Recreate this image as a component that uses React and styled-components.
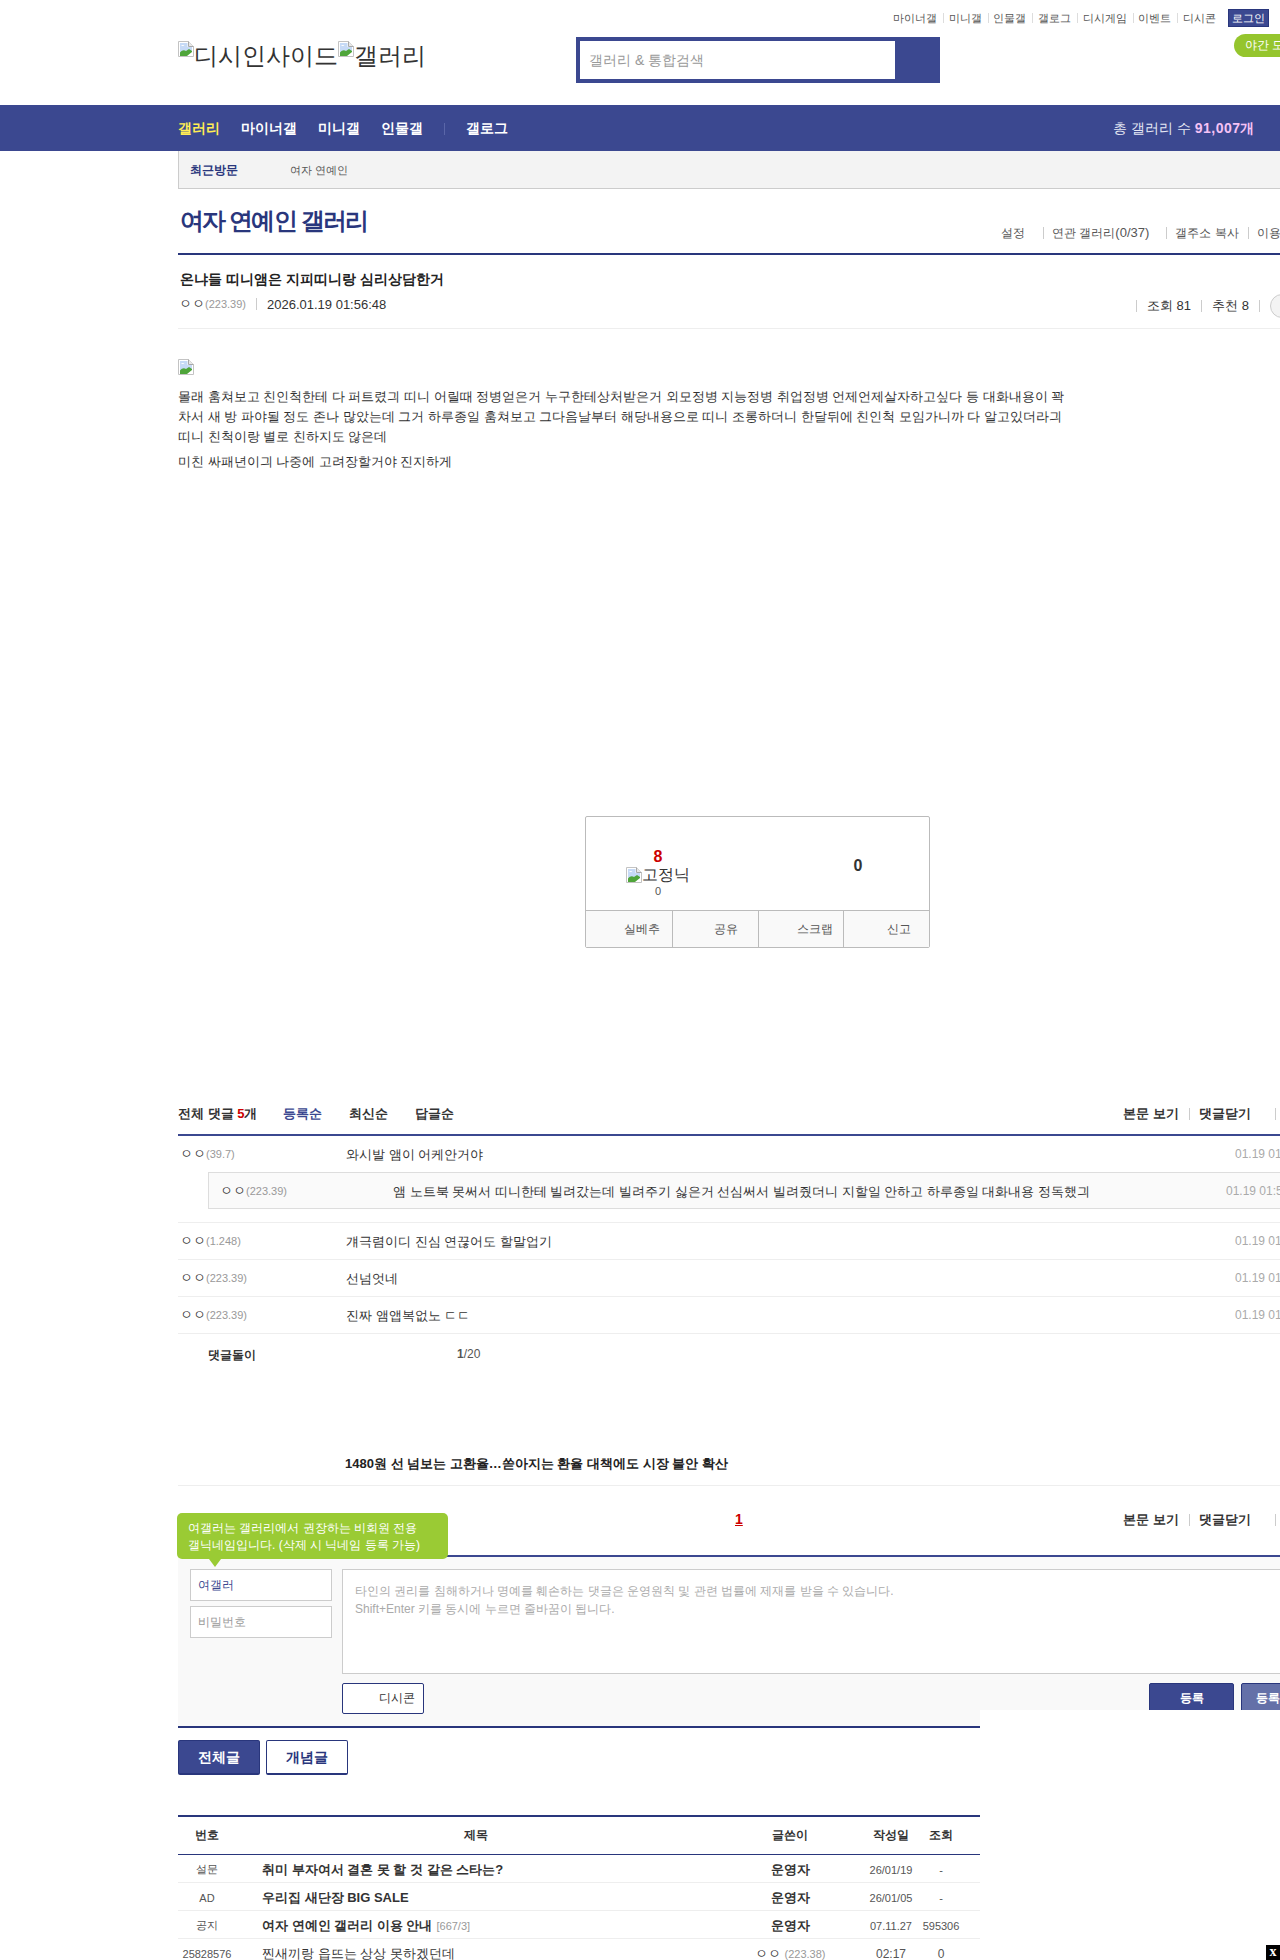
import React from "react";
import styled, { createGlobalStyle } from "styled-components";

const Global = createGlobalStyle`
  html, body { margin: 0; padding: 0; background: #fff; }
  body { width: 1280px; height: 1960px; overflow: hidden; font-family: "Liberation Sans", sans-serif; color: #333; font-size: 12px; }
  * { box-sizing: border-box; }
`;

const Page = styled.div`position: relative; width: 1280px; height: 1960px; overflow: hidden;`;

const Header = styled.header`height: 105px; padding-left: 178px; width: 1400px;`;
const TopLinks = styled.div`display: flex; justify-content: flex-end; align-items: flex-start; width: 1091px; height: 34px; padding-top: 9px; font-size: 11px; color: #555;`;
const TopLink = styled.span`
  padding: 0 5.85px; line-height: 18px; position: relative; color: #555;
  & + &::before { content: ""; position: absolute; left: 0; top: 4px; width: 1px; height: 10px; background: #ddd; }
`;
const LoginBtn = styled.span`margin-left: 6px; width: 41px; height: 18px; background: #3b4890; border: 1px solid #29367c; color: #fff; display: flex; align-items: center; justify-content: center; font-size: 11px;`;
const HeaderMain = styled.div`display: flex; align-items: flex-start;`;
const Logo = styled.div`width: 398px; display: flex; align-items: flex-start; padding-top: 7px; font-size: 24px; line-height: 30px; color: #333;`;
const Search = styled.div`margin-top: 3px; width: 364px; height: 46px; display: flex; background: #3b4890; padding: 4px 0 4px 4px;`;
const SearchInput = styled.div`width: 315px; background: #fff; color: #999; font-size: 14px; display: flex; align-items: center; padding: 2px 0 0 9px;`;
const NightPill = styled.div`margin-left: 294px; flex: none; width: 90px; height: 23px; border-radius: 12px; background: #95c52d; color: #fff; font-size: 12px; line-height: 23px; padding-left: 11px; white-space: nowrap;`;

const BrokenSvg = styled.svg`flex: none; display: block;`;
const BrokenImage = () => (
  <BrokenSvg width="16" height="16" viewBox="0 0 16 16">
    <path d="M0.5 0.5H10.5L15.5 5.5V15.5H0.5Z" fill="#fff" stroke="#c3c3c3" />
    <path d="M10.5 0.5V5.5H15.5" fill="#e8e8e8" stroke="#a8a8a8" />
    <path d="M2 2H9.5V6H14V10L8 14H2Z" fill="#c6daf6" />
    <path d="M2 14V11.5C4 9 6 8.5 8 10L11 8L14 10V11L9 15H2Z" fill="#4fa53a" />
    <path d="M10 15L15 11V15Z" fill="#fff" />
    <path d="M3 5C4 3.8 5.5 3.8 6.5 5H3Z" fill="#fff" />
  </BrokenSvg>
);

const Nav = styled.nav`height: 46px; background: #3b4890; padding: 1px 0 0 178px; display: flex; align-items: center; font-size: 14px; font-weight: 700; color: #fff;`;
const NavItem = styled.span`color: ${(p) => (p.$active ? "#ffed54" : "#fff")}; margin-right: 21px;`;
const NavSep = styled.i`width: 1px; height: 12px; background: #5a66a8; margin: 0 21px 0 0;`;
const NavTotal = styled.span`margin-left: auto; margin-right: 25px; font-weight: 400; color: #e6e8f4;`;
const NavCount = styled.b`color: #f5c2f5; letter-spacing: 0.5px;`;

const Wrap = styled.main`margin-left: 178px; width: 1160px;`;
const Recent = styled.div`height: 38px; background: #f3f3f3; border-left: 1px solid #ccc; border-bottom: 1px solid #ccc; display: flex; align-items: center; padding: 1px 0 0 11px; font-size: 11px; color: #555;`;
const RecentLabel = styled.b`color: #29367c; width: 100px; font-size: 12px;`;

const TitleBar = styled.div`height: 66px; border-bottom: 2px solid #29367c; position: relative; display: flex; align-items: flex-start; justify-content: space-between;`;
const GalleryTitle = styled.h1`margin: 15px 0 0 2px; font-size: 24px; line-height: 34px; font-weight: 700; color: #29367c; letter-spacing: -1.8px;`;
const TitleLinks = styled.div`display: flex; margin-top: 37px; position: absolute; left: 814px; font-size: 12px; color: #555; white-space: nowrap; align-items: center;`;
const TitleLink = styled.span`padding-right: 9px; padding-left: 9px; position: relative; line-height: 14px; margin-left: ${(p) => p.$ml || 0}px;
  ${(p) => p.$sep && `&::before { content: ""; position: absolute; left: 0; top: 1px; width: 1px; height: 12px; background: #ccc; }`}
`;
const RelCount = styled.span`font-size: 13px;`;

const PostHead = styled.section`height: 74px; border-bottom: 1px solid #eee; position: relative;`;
const PostTitle = styled.h2`margin: 0; padding: 14px 0 0 2px; font-size: 14px; line-height: 20px; font-weight: 700; color: #222;`;
const PostMeta = styled.div`display: flex; justify-content: space-between; align-items: center; margin-top: 5px; height: 20px;`;
const Writer = styled.div`display: flex; align-items: center; padding-left: 1px; font-size: 13px; color: #333;`;
const Ip = styled.span`font-size: 11px; color: #999;`;
const MetaSep = styled.i`width: 1px; height: 12px; background: #ccc; margin: 0 10px;`;
const Stats = styled.div`display: flex; align-items: center; font-size: 13px; color: #333; margin-top: 4px; white-space: nowrap; position: absolute; left: 948px;`;
const StatSep = styled.i`width: 1px; height: 12px; background: #ccc; margin: 0 10px;`;
const RoundBtn = styled.i`width: 24px; height: 24px; border-radius: 50%; background: #f3f3f3; border: 1px solid #ccc; flex: none; margin-right: 20px;`;

const Body = styled.article`width: 900px; padding-top: 30px; font-size: 13px; line-height: 20px; color: #333; height: 487px;`;
const Para = styled.p`margin: 0 0 5px; width: 890px;`;
const ImgWrap = styled.div`height: 28px;`;

const RecBox = styled.div`margin-left: 407px; width: 345px; height: 132px; border: 1px solid #bbb; border-radius: 2px;`;
const RecTop = styled.div`height: 93px; position: relative; display: flex;`;
const RecLeft = styled.div`width: 152px; padding-top: 31px; display: flex; flex-direction: column; align-items: center; padding-right: 8px;`;
const RecNum = styled.b`font-size: 16px; line-height: 17px; color: #c00;`;
const FixedNick = styled.div`display: flex; align-items: center; font-size: 16px; line-height: 19px; color: #333;`;
const RecSub = styled.span`font-size: 11px; line-height: 14px; color: #555;`;
const RecRight = styled.b`flex: 1; text-align: center; font-size: 16px; line-height: 18px; padding: 40px 0 0 49px; color: #333;`;
const RecBtns = styled.div`height: 37px; background: #f9f9f9; border-top: 1px solid #bbb; display: grid; grid-template-columns: repeat(4, 1fr); font-size: 12px; color: #555;`;
const RecBtn = styled.div`display: flex; align-items: center; justify-content: flex-end; padding: 1px ${(p) => p.$pr}px 0 0; & + & { border-left: 1px solid #bbb; }`;

const CmtHead = styled.div`height: ${(p) => p.$h}px; border-bottom: 2px solid #3b4890; display: flex; align-items: flex-start; font-size: 13px; font-weight: 700; color: #333; padding-top: ${(p) => p.$pt}px; position: relative;`;
const Tab = styled.span`margin-left: ${(p) => p.$ml}px; color: ${(p) => p.$color || "#333"};`;
const PageNum = styled(Tab)`font-size: 14px; text-decoration: underline;`;
const Red = styled.span`color: #c00;`;
const HeadRight = styled.div`display: flex; align-items: center; position: absolute; left: 945px; white-space: nowrap;`;
const HeadSep = styled.i`width: 1px; height: 12px; background: #ccc; margin: 0 ${(p) => p.$mr ?? 9}px 0 ${(p) => p.$ml || 10}px;`;

const CmtRow = styled.div`min-height: 37px; border-bottom: 1px solid #eee; `;
const CmtLine = styled.div`display: flex; height: 36px; position: relative; font-size: 13px; color: #333; align-items: center;`;
const CmtName = styled.div`width: ${(p) => p.$w}px; padding-left: ${(p) => p.$pl}px; flex: none; font-size: 13px; color: #333; margin-top: -1px;`;
const CmtText = styled.div`flex: none; line-height: 18px; margin-top: 2px;`;
const CmtDate = styled.div`position: absolute; left: ${(p) => p.$left}px; top: 11px; font-size: 12px; color: #aaa; white-space: nowrap;`;
const Reply = styled.div`margin: 0 0 13px 30px; background: #fafafa; border: 1px solid #ddd; height: 37px;`;
const CmtFoot = styled.div`height: 119px; padding: 13px 0 0 30px; display: flex; font-size: 12px;`;
const BotName = styled.b`width: 249px; color: #333;`;
const Pager = styled.span`color: #555;`;
const AdRow = styled.div`padding-left: 167px; font-size: 13px; font-weight: 700; color: #222; border-bottom: 1px solid #eee; height: 33px; padding-top: 2px;`;

const FormBox = styled.div`background: #f9f9f9; height: 171px; border-bottom: 2px solid #29367c; position: relative; padding: 12px 0 0 12px; display: flex; gap: 10px;`;
const FormLeft = styled.div`width: 142px; display: flex; flex-direction: column; gap: 5px; flex: none;`;
const FormField = styled.div`height: 32px; background: #fff; border: 1px solid #ccc; padding-left: 7px; line-height: 30px; font-size: 12px; color: ${(p) => p.$color};`;
const FormRight = styled.div`flex: 1;`;
const TextArea = styled.div`height: 105px; background: #fff; border: 1px solid #ccc; padding: 12px 12px; font-size: 12px; line-height: 18px; color: #aaa;`;
const FormBtns = styled.div`display: flex; margin-top: 9px; align-items: flex-start;`;
const DcconBtn = styled.div`width: 82px; height: 31px; background: #fff; border: 1px solid #29367c; border-radius: 2px; font-size: 12px; text-align: right; padding-right: 8px; line-height: 29px; color: #333; margin-right: 725px;`;
const SubmitBtn = styled.div`width: ${(p) => p.$w}px; height: 31px; background: ${(p) => p.$bg}; border: 1px solid #29367c; border-radius: 2px; font-size: 12px; font-weight: 700; color: #fff; text-align: center; line-height: 29px; margin-left: ${(p) => p.$ml || 0}px; flex: none;`;
const Tooltip = styled.div`position: absolute; left: -1px; top: -44px; width: 271px; height: 46px; background: #9acb34; border-radius: 5px; color: #fff; font-size: 12px; line-height: 17px; padding: 7px 11px; white-space: nowrap;
  &::after { content: ""; position: absolute; left: 32px; bottom: -8px; border: 6px solid transparent; border-bottom: 0; border-top: 8px solid #9acb34; }
`;
const Mask = styled.div`position: absolute; left: 980px; top: 1710px; right: 0; bottom: 0; background: #fff;`;

const ListTabs = styled.div`display: flex; gap: 6px; padding-top: 12px; height: 87px;`;
const ListTab = styled.div`width: 82px; height: 35px; background: ${(p) => (p.$on ? "#3b4890" : "#fff")}; color: ${(p) => (p.$on ? "#fff" : "#29367c")}; border: 1px solid #29367c; border-bottom-width: 2px; border-radius: 2px; font-size: 14px; font-weight: 700; text-align: center; line-height: 32px;`;

const Table = styled.div`width: 802px; border-top: 2px solid #29367c;`;
const Row = styled.div`display: grid; grid-template-columns: 58px 480px 148px 54px 46px 16px; height: ${(p) => p.$h || 28}px; padding-top: ${(p) => (p.$head ? 0 : 2)}px; align-items: center; border-bottom: 1px solid ${(p) => (p.$head ? "#29367c" : "#eee")};`;
const HeadCell = styled.div`text-align: center; font-size: 12px; font-weight: 700; color: #333;`;
const Cell = styled.div`text-align: center; font-size: ${(p) => p.$size || 11}px; color: #555; white-space: nowrap;`;
const TitleCell = styled.div`padding-left: 26px; font-size: 13px; font-weight: ${(p) => (p.$bold ? 700 : 400)}; color: #333; white-space: nowrap;`;
const WriterCell = styled.div`text-align: center; font-size: 13px; font-weight: ${(p) => (p.$bold ? 700 : 400)}; color: #333; white-space: nowrap;`;
const Cnt = styled.span`font-size: 11px; font-weight: 400; color: #999; margin-left: 4px;`;
const CloseX = styled.div`position: absolute; right: 0; bottom: 0; width: 14px; height: 15px; background: #000; color: #fff; font: 700 14px/14px "Liberation Serif", serif; text-align: center;`;

const comments = [
  { ip: "(1.248)", text: "걔극렴이디 진심 연끊어도 할말업기" },
  { ip: "(223.39)", text: "선넘엇네" },
  { ip: "(223.39)", text: "진짜 앰앱복없노 ㄷㄷ" },
];

const nick = "ㅇㅇ";

export default function App() {
  return (
    <Page>
      <Global />
      <Header>
        <TopLinks>
          <TopLink>마이너갤</TopLink>
          <TopLink>미니갤</TopLink>
          <TopLink>인물갤</TopLink>
          <TopLink>갤로그</TopLink>
          <TopLink>디시게임</TopLink>
          <TopLink>이벤트</TopLink>
          <TopLink>디시콘</TopLink>
          <LoginBtn>로그인</LoginBtn>
        </TopLinks>
        <HeaderMain>
          <Logo>
            <BrokenImage />디시인사이드<BrokenImage />갤러리
          </Logo>
          <Search>
            <SearchInput>갤러리 &amp; 통합검색</SearchInput>
          </Search>
          <NightPill>야간 모드</NightPill>
        </HeaderMain>
      </Header>
      <Nav>
        <NavItem $active>갤러리</NavItem>
        <NavItem>마이너갤</NavItem>
        <NavItem>미니갤</NavItem>
        <NavItem>인물갤</NavItem>
        <NavSep />
        <NavItem>갤로그</NavItem>
        <NavTotal>총 갤러리 수 <NavCount>91,007개</NavCount></NavTotal>
      </Nav>
      <Wrap>
        <Recent>
          <RecentLabel>최근방문</RecentLabel>
          <span>여자 연예인</span>
        </Recent>
        <TitleBar>
          <GalleryTitle>여자 연예인 갤러리</GalleryTitle>
          <TitleLinks>
            <TitleLink>설정</TitleLink>
            <TitleLink $sep $ml={9}>연관 갤러리<RelCount>(0/37)</RelCount></TitleLink>
            <TitleLink $sep $ml={8}>갤주소 복사</TitleLink>
            <TitleLink $sep>이용 안내</TitleLink>
          </TitleLinks>
        </TitleBar>
        <PostHead>
          <PostTitle>온냐들 띠니앰은 지피띠니랑 심리상담한거</PostTitle>
          <PostMeta>
            <Writer>
              {nick}<Ip>(223.39)</Ip><MetaSep />2026.01.19 01:56:48
            </Writer>
            <Stats>
              <StatSep />조회 81<StatSep />추천 8<StatSep /><RoundBtn />
            </Stats>
          </PostMeta>
        </PostHead>
        <Body>
          <ImgWrap><BrokenImage /></ImgWrap>
          <Para>
            몰래 훔쳐보고 친인척한테 다 퍼트렸긔 띠니 어릴때 정병얻은거 누구한테상처받은거 외모정병 지능정병 취업정병 언제언제살자하고싶다 등 대화내용이 꽉 차서 새 방 파야될 정도 존나 많았는데 그거 하루종일 훔쳐보고 그다음날부터 해당내용으로 띠니 조롱하더니 한달뒤에 친인척 모임가니까 다 알고있더라긔 띠니 친척이랑 별로 친하지도 않은데
          </Para>
          <Para>미친 싸패년이긔 나중에 고려장할거야 진지하게</Para>
        </Body>
        <RecBox>
          <RecTop>
            <RecLeft>
              <RecNum>8</RecNum>
              <FixedNick><BrokenImage />고정닉</FixedNick>
              <RecSub>0</RecSub>
            </RecLeft>
            <RecRight>0</RecRight>
          </RecTop>
          <RecBtns>
            <RecBtn $pr={12}>실베추</RecBtn>
            <RecBtn $pr={20}>공유</RecBtn>
            <RecBtn $pr={10}>스크랩</RecBtn>
            <RecBtn $pr={18}>신고</RecBtn>
          </RecBtns>
        </RecBox>
        <CmtHead $h={188} $pt={157}>
          <span>전체 댓글 <Red>5</Red>개</span>
          <Tab $ml={26} $color="#3b4890">등록순</Tab>
          <Tab $ml={27}>최신순</Tab>
          <Tab $ml={27}>답글순</Tab>
          <HeadRight>
            본문 보기<HeadSep />댓글닫기<HeadSep $mr={0} $ml={24} />
          </HeadRight>
        </CmtHead>
        <CmtRow>
          <CmtLine>
            <CmtName $w={168} $pl={2}>{nick}<Ip>(39.7)</Ip></CmtName>
            <CmtText>와시발 앰이 어케안거야</CmtText>
            <CmtDate $left={1057}>01.19 01:56:48</CmtDate>
          </CmtLine>
          <Reply>
            <CmtLine>
              <CmtName $w={184} $pl={11}>{nick}<Ip>(223.39)</Ip></CmtName>
              <CmtText>앰 노트북 못써서 띠니한테 빌려갔는데 빌려주기 싫은거 선심써서 빌려줬더니 지할일 안하고 하루종일 대화내용 정독했긔</CmtText>
              <CmtDate $left={1017}>01.19 01:58:11</CmtDate>
            </CmtLine>
          </Reply>
        </CmtRow>
        {comments.map((c, i) => (
          <CmtRow key={i}>
            <CmtLine>
              <CmtName $w={168} $pl={2}>{nick}<Ip>{c.ip}</Ip></CmtName>
              <CmtText>{c.text}</CmtText>
              <CmtDate $left={1057}>01.19 01:58:30</CmtDate>
            </CmtLine>
          </CmtRow>
        ))}
        <CmtFoot>
          <BotName>댓글돌이</BotName>
          <Pager><b>1</b>/20</Pager>
        </CmtFoot>
        <AdRow>1480원 선 넘보는 고환율…쏟아지는 환율 대책에도 시장 불안 확산</AdRow>
        <CmtHead $h={71} $pt={25}>
          <PageNum $ml={557} $color="#c00">1</PageNum>
          <HeadRight>
            본문 보기<HeadSep />댓글닫기<HeadSep $mr={0} $ml={24} />
          </HeadRight>
        </CmtHead>
        <FormBox>
          <Tooltip>
            여갤러는 갤러리에서 권장하는 비회원 전용<br />
            갤닉네임입니다. (삭제 시 닉네임 등록 가능)
          </Tooltip>
          <FormLeft>
            <FormField $color="#3b4890">여갤러</FormField>
            <FormField $color="#999">비밀번호</FormField>
          </FormLeft>
          <FormRight>
            <TextArea>
              타인의 권리를 침해하거나 명예를 훼손하는 댓글은 운영원칙 및 관련 법률에 제재를 받을 수 있습니다.<br />
              Shift+Enter 키를 동시에 누르면 줄바꿈이 됩니다.
            </TextArea>
            <FormBtns>
              <DcconBtn>디시콘</DcconBtn>
              <SubmitBtn $w={85} $bg="#3b4890">등록</SubmitBtn>
              <SubmitBtn $w={85} $bg="#6470a8" $ml={7}>등록+추천</SubmitBtn>
            </FormBtns>
          </FormRight>
        </FormBox>
        <ListTabs>
          <ListTab $on>전체글</ListTab>
          <ListTab>개념글</ListTab>
        </ListTabs>
        <Table>
          <Row $head $h={38}>
            <HeadCell>번호</HeadCell>
            <HeadCell>제목</HeadCell>
            <HeadCell>글쓴이</HeadCell>
            <HeadCell>작성일</HeadCell>
            <HeadCell>조회</HeadCell>
          </Row>
          <Row>
            <Cell>설문</Cell>
            <TitleCell $bold>취미 부자여서 결혼 못 할 것 같은 스타는?</TitleCell>
            <WriterCell $bold>운영자</WriterCell>
            <Cell>26/01/19</Cell>
            <Cell>-</Cell>
          </Row>
          <Row>
            <Cell>AD</Cell>
            <TitleCell $bold>우리집 새단장 BIG SALE</TitleCell>
            <WriterCell $bold>운영자</WriterCell>
            <Cell>26/01/05</Cell>
            <Cell>-</Cell>
          </Row>
          <Row>
            <Cell>공지</Cell>
            <TitleCell $bold>여자 연예인 갤러리 이용 안내<Cnt>[667/3]</Cnt></TitleCell>
            <WriterCell $bold>운영자</WriterCell>
            <Cell>07.11.27</Cell>
            <Cell>595306</Cell>
          </Row>
          <Row>
            <Cell>25828576</Cell>
            <TitleCell>찐새끼랑 읍뜨는 상상 못하겠던데</TitleCell>
            <WriterCell>{nick}<Cnt>(223.38)</Cnt></WriterCell>
            <Cell $size={12}>02:17</Cell>
            <Cell $size={12}>0</Cell>
          </Row>
        </Table>
      </Wrap>
      <Mask />
      <CloseX>x</CloseX>
    </Page>
  );
}
